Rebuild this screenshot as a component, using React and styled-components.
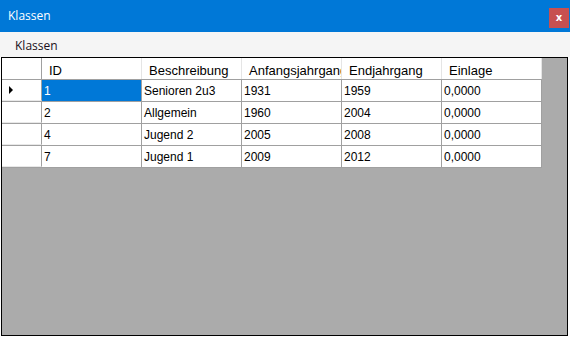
import React from "react";
import styled, { createGlobalStyle } from "styled-components";

const GlobalStyle = createGlobalStyle`
  html, body {
    margin: 0;
    padding: 0;
    background: #ffffff;
  }
  * {
    box-sizing: border-box;
  }
`;

const Window = styled.div`
  width: 570px;
  height: 337px;
  display: flex;
  flex-direction: column;
  background: #ffffff;
  font-family: "Liberation Sans", Arial, sans-serif;
  overflow: hidden;
`;

const TitleBar = styled.div`
  height: 32px;
  flex: none;
  background: #0078d7;
  display: flex;
  align-items: center;
  justify-content: space-between;
  padding: 0 1px 0 8px;
`;

const Title = styled.span`
  color: #ffffff;
  font-family: "Open Sans", "Liberation Sans", sans-serif;
  font-size: 12px;
  margin-top: -1px;
`;

const CloseButton = styled.div`
  width: 20px;
  height: 20px;
  margin-top: 4px;
  background: #c75050;
  color: #ffffff;
  font-family: "DejaVu Sans", sans-serif;
  font-size: 10px;
  font-weight: bold;
  display: flex;
  align-items: center;
  justify-content: center;
  line-height: 1;
`;

const MenuBar = styled.div`
  height: 25px;
  flex: none;
  background: #f5f5f5;
  display: flex;
  align-items: center;
  padding: 0 8px;
`;

const MenuItem = styled.span`
  font-family: "Open Sans", "Liberation Sans", sans-serif;
  font-size: 12px;
  color: #1a1020;
  padding: 0 7px;
  margin-top: 1px;
`;

const GridPanel = styled.div`
  flex: 1;
  margin: 0 2px 1px 1px;
  border: 1px solid #000000;
  background: #ababab;
  display: flex;
  flex-direction: column;
  align-items: flex-start;
`;

const Row = styled.div`
  display: flex;
  height: ${({ $header }) => ($header ? "22px" : "22px")};
  background: #ffffff;
  border-bottom: 1px solid #a0a0a0;
`;

const RowHeader = styled.div`
  width: 40px;
  height: 100%;
  border-right: 1px solid #a0a0a0;
  border-bottom: ${({ $header }) => ($header ? "none" : "1px solid #e8e8e8")};
  display: flex;
  align-items: center;
  padding-left: 7px;
  margin-bottom: ${({ $header }) => ($header ? "0" : "-1px")};
  background: #ffffff;
`;

const Indicator = styled.div`
  width: 0;
  height: 0;
  border-top: 4px solid transparent;
  border-bottom: 4px solid transparent;
  border-left: 4px solid #000000;
`;

const HeaderCell = styled.div`
  width: 100px;
  height: 100%;
  border-right: 1px solid #e5e5e5;
  font-family: "Liberation Sans", Arial, sans-serif;
  font-size: 13px;
  color: #000000;
  padding: 5px 0 0 7px;
  white-space: nowrap;
  overflow: hidden;
`;

const Cell = styled.div`
  width: 100px;
  height: 100%;
  border-right: 1px solid #a0a0a0;
  font-size: 12px;
  color: ${({ $selected }) => ($selected ? "#ffffff" : "#000000")};
  background: ${({ $selected }) => ($selected ? "#0078d7" : "#ffffff")};
  padding: 4px 0 0 2px;
  white-space: nowrap;
  overflow: hidden;
`;

const columns = ["ID", "Beschreibung", "Anfangsjahrgang", "Endjahrgang", "Einlage"];

const rows = [
  ["1", "Senioren 2u3", "1931", "1959", "0,0000"],
  ["2", "Allgemein", "1960", "2004", "0,0000"],
  ["4", "Jugend 2", "2005", "2008", "0,0000"],
  ["7", "Jugend 1", "2009", "2012", "0,0000"],
];

export default function App() {
  return (
    <>
      <GlobalStyle />
      <Window>
        <TitleBar>
          <Title>Klassen</Title>
          <CloseButton>x</CloseButton>
        </TitleBar>
        <MenuBar>
          <MenuItem>Klassen</MenuItem>
        </MenuBar>
        <GridPanel>
          <Row $header>
            <RowHeader $header />
            {columns.map((c) => (
              <HeaderCell key={c}>{c}</HeaderCell>
            ))}
          </Row>
          {rows.map((r, i) => (
            <Row key={r[0]}>
              <RowHeader>{i === 0 && <Indicator />}</RowHeader>
              {r.map((v, j) => (
                <Cell key={j} $selected={i === 0 && j === 0}>
                  {v}
                </Cell>
              ))}
            </Row>
          ))}
        </GridPanel>
      </Window>
    </>
  );
}
